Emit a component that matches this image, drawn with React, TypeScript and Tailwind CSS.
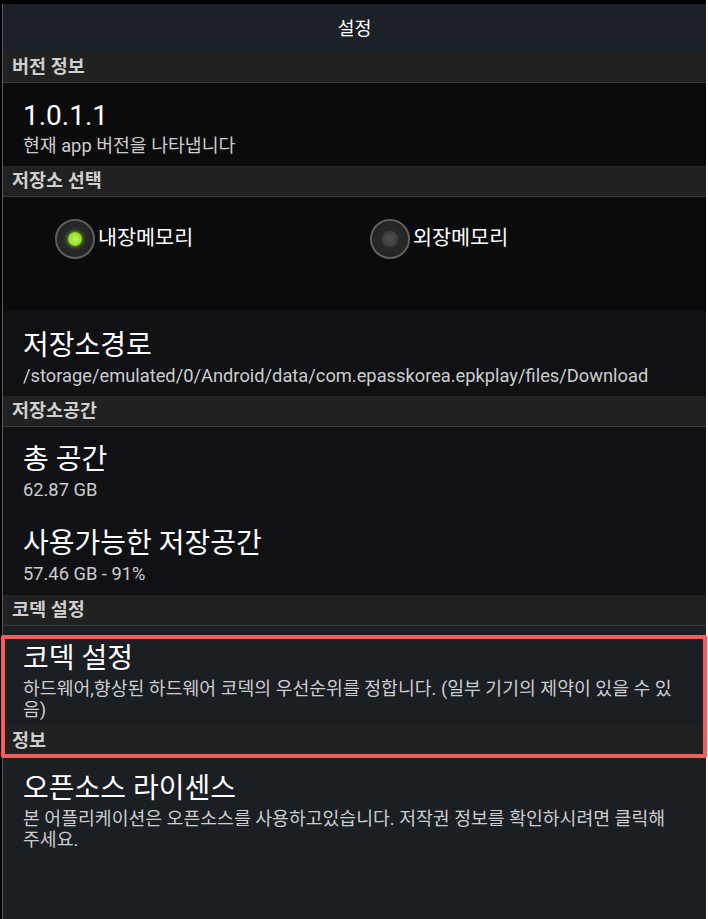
import React from 'react';

const SectionHeader = ({ label }: { label: string }) => (
  <div className="h-[31px] shrink-0 bg-[#212121] border-b border-[#3a3a3a] pl-[9px] flex items-center">
    <span className="text-[18.5px] font-bold text-[#cfcfcf] leading-none">{label}</span>
  </div>
);

const Item = ({
  title,
  subtitle,
  bg,
  pt = 'pt-[17px]',
  pb = 'pb-[11px]',
}: {
  title: string;
  subtitle: string;
  bg: string;
  pt?: string;
  pb?: string;
}) => (
  <div className={`${bg} ${pt} ${pb} shrink-0 pl-[20px] pr-[30px]`}>
    <div className="text-[28px] leading-[32px] text-white">{title}</div>
    <div className="mt-[3px] text-[18.3px] leading-[21px] text-[#cdcdcd]">{subtitle}</div>
  </div>
);

const Radio = ({ label, checked }: { label: string; checked: boolean }) => (
  <div className="flex items-center gap-[3px]">
    <div className="w-[40px] h-[40px] rounded-full border-2 border-[#5e5e5e] bg-[radial-gradient(circle,#2e2e2e_0%,#262626_60%,#1c1c1c_100%)] flex items-center justify-center">
      {checked ? (
        <div className="w-[14px] h-[14px] rounded-full bg-[radial-gradient(circle,#c4f55a_0%,#8fd824_70%,#6fae18_100%)] shadow-[0_0_4px_#8fd824]" />
      ) : (
        <div className="w-[16px] h-[16px] rounded-full bg-[radial-gradient(circle,#505050_0%,#3e3e3e_70%,#333333_100%)]" />
      )}
    </div>
    <span className="text-[20.7px] text-white">{label}</span>
  </div>
);

export default function App() {
  return (
    <div
      className="relative w-[708px] h-[919px] bg-white overflow-hidden"
      style={{ fontFamily: 'Roboto, "Noto Sans CJK KR", sans-serif' }}
    >
      <div className="w-[706px] h-full bg-black pt-[4px] pl-[2px] flex flex-col">
        <div className="flex-1 border-l border-[#5a5a5a] flex flex-col overflow-hidden bg-[#1b1e23]">
          {/* title bar */}
          <div className="h-[48px] shrink-0 bg-[#1c2028] flex items-center justify-center pt-[3px]">
            <span className="text-[18.5px] text-white">설정</span>
          </div>

          <SectionHeader label="버전 정보" />
          <Item title="1.0.1.1" subtitle="현재 app 버전을 나타냅니다" bg="bg-[#0b0b0d]" pb="pb-[10px]" />

          <SectionHeader label="저장소 선택" />
          <div className="h-[114px] shrink-0 bg-[#0b0b0d] pt-[22px] pl-[52px] pr-[21px] grid grid-cols-2 items-start">
            <Radio label="내장메모리" checked />
            <Radio label="외장메모리" checked={false} />
          </div>
          <Item
            title="저장소경로"
            subtitle="/storage/emulated/0/Android/data/com.epasskorea.epkplay/files/Download"
            bg="bg-[#101114]"
            pt="pt-[19px]"
            pb="pb-[10px]"
          />

          <SectionHeader label="저장소공간" />
          <Item title="총 공간" subtitle="62.87 GB" bg="bg-[#101114]" />
          <Item title="사용가능한 저장공간" subtitle="57.46 GB - 91%" bg="bg-[#101114]" />

          <SectionHeader label="코덱 설정" />
          <Item
            title="코덱 설정"
            subtitle="하드웨어,향상된 하드웨어 코덱의 우선순위를 정합니다. (일부 기기의 제약이 있을 수 있음)"
            bg="bg-[#1b1e23]"
            pb="pb-[6px]"
          />

          <div className="h-[30px] shrink-0 bg-[#212121] pl-[9px] flex items-center">
            <span className="text-[18.5px] font-bold text-[#cfcfcf] leading-none">정보</span>
          </div>
          <Item
            title="오픈소스 라이센스"
            subtitle="본 어플리케이션은 오픈소스를 사용하고있습니다. 저작권 정보를 확인하시려면 클릭해 주세요."
            bg="bg-[#1b1e23]"
          />
        </div>
      </div>

      {/* highlight annotation */}
      <div className="absolute left-[1px] top-[635px] w-[706px] h-[123px] border-4 border-[#ef605a] rounded-[2px] pointer-events-none" />
    </div>
  );
}
